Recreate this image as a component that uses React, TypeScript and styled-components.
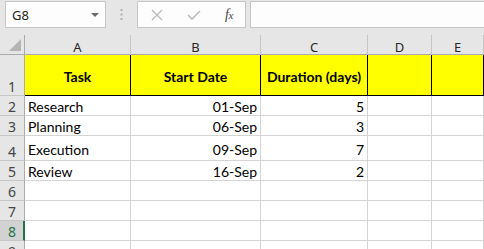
import React from "react";
import styled, { createGlobalStyle } from "styled-components";

const Global = createGlobalStyle`
  html, body { margin: 0; padding: 0; background: #ffffff; }
  * { box-sizing: border-box; }
`;

const Screen = styled.div`
  width: 484px;
  height: 249px;
  overflow: hidden;
  background: #ffffff;
  font-family: "Lato", "Liberation Sans", sans-serif;
`;

const FormulaBar = styled.div`
  display: flex;
  align-items: flex-start;
  height: 35px;
  padding-top: 1px;
  background: #e6e6e6;
`;

const NameBox = styled.div`
  margin-left: 5px;
  width: 101px;
  height: 27px;
  border: 1px solid #c6c6c6;
  background: #fdfdfd;
  display: flex;
  align-items: center;
  justify-content: space-between;
  padding: 0 6px 0 6px;
  font-family: "Noto Sans", sans-serif;
  font-size: 13px;
  color: #222;
`;

const Arrow = styled.span`
  width: 0;
  height: 0;
  border-left: 4px solid transparent;
  border-right: 4px solid transparent;
  border-top: 4px solid #6a6a6a;
  margin-top: 1px;
`;

const Grip = styled.div`
  width: 31px;
  height: 27px;
  display: flex;
  align-items: center;
  justify-content: center;
`;

const FxBox = styled.div`
  width: 109px;
  height: 27px;
  border: 1px solid #c6c6c6;
  background: #fdfdfd;
  display: flex;
  align-items: center;
  padding-left: 13px;
`;

const IconSlot = styled.span<{ $w: number }>`
  width: ${(p) => p.$w}px;
  display: flex;
  align-items: center;
`;

const Fx = styled.span`
  font-family: "Liberation Serif", serif;
  font-style: italic;
  font-size: 14px;
  color: #444;
  letter-spacing: -0.5px;
`;

const FxSub = styled.span`
  font-size: 11px;
`;

const FormulaInput = styled.div`
  flex: 1;
  height: 27px;
  margin-left: 4px;
  border: 1px solid #c6c6c6;
  border-right: none;
  background: #fdfdfd;
`;

const Sheet = styled.div`
  display: grid;
  grid-template-columns: 25px 106px 130px 107px 64px 1fr;
  grid-template-rows: 20px 41px 20px 20px 25px 20px 20px 20px 20px 20px;
`;

const Corner = styled.div`
  background: #e6e6e6;
  border-right: 1px solid #ababab;
  border-bottom: 1px solid #ababab;
  position: relative;
`;

const Triangle = styled.span`
  position: absolute;
  right: 3px;
  bottom: 3px;
  width: 0;
  height: 0;
  border-left: 12px solid transparent;
  border-bottom: 12px solid #b4b4b4;
`;

const ColHead = styled.div`
  background: #e6e6e6;
  border-right: 1px solid #c6c6c6;
  border-bottom: 1px solid #ababab;
  display: flex;
  align-items: center;
  justify-content: center;
  font-family: "Noto Sans", sans-serif;
  font-size: 13px;
  color: #262626;
  padding-top: 4px;
`;

const RowHead = styled.div<{ $sel?: boolean }>`
  background: ${(p) => (p.$sel ? "#d2d2d2" : "#e6e6e6")};
  border-right: ${(p) => (p.$sel ? "2px solid #217346" : "1px solid #ababab")};
  border-bottom: 1px solid #c6c6c6;
  display: flex;
  align-items: flex-end;
  justify-content: center;
  font-family: "Noto Sans", sans-serif;
  font-size: 14px;
  line-height: 16px;
  color: ${(p) => (p.$sel ? "#217346" : "#444")};
  padding-left: ${(p) => (p.$sel ? "1px" : "0")};
`;

const HeaderCell = styled.div`
  background: #ffff00;
  border-right: 1px solid #000;
  border-bottom: 1px solid #000;
  display: flex;
  align-items: center;
  justify-content: center;
  font-weight: 700;
  font-size: 14px;
  color: #000;
  padding-top: 3px;
`;

const Cell = styled.div<{ $align?: "left" | "right"; $lift?: number }>`
  border-right: 1px solid #d4d4d4;
  border-bottom: 1px solid #d4d4d4;
  display: flex;
  align-items: flex-end;
  justify-content: ${(p) => (p.$align === "right" ? "flex-end" : "flex-start")};
  padding: 0 3px ${(p) => p.$lift ?? 0}px 3px;
  font-size: 14px;
  line-height: 16px;
  color: #000;
  white-space: nowrap;
  overflow: hidden;
`;

const rows = [
  ["Research", "01-Sep", "5"],
  ["Planning", "06-Sep", "3"],
  ["Execution", "09-Sep", "7"],
  ["Review", "16-Sep", "2"],
];

export default function App() {
  return (
    <Screen>
      <Global />
      <FormulaBar>
        <NameBox>
          <span>G8</span>
          <Arrow />
        </NameBox>
        <Grip>
          <svg width="3" height="11" viewBox="0 0 3 11">
            <rect x="0.5" y="0" width="2" height="2" fill="#b0b0b0" />
            <rect x="0.5" y="4.5" width="2" height="2" fill="#b0b0b0" />
            <rect x="0.5" y="9" width="2" height="2" fill="#b0b0b0" />
          </svg>
        </Grip>
        <FxBox>
          <IconSlot $w={36}>
            <svg width="12" height="12" viewBox="0 0 12 12">
              <path d="M1 1 L11 11 M11 1 L1 11" stroke="#bcbcbc" strokeWidth="1.4" />
            </svg>
          </IconSlot>
          <IconSlot $w={38}>
            <svg width="14" height="12" viewBox="0 0 14 12">
              <path d="M1 6 L5 10 L13 2" stroke="#bcbcbc" strokeWidth="1.6" fill="none" />
            </svg>
          </IconSlot>
          <Fx>
            f<FxSub>x</FxSub>
          </Fx>
        </FxBox>
        <FormulaInput />
      </FormulaBar>
      <Sheet>
        <Corner>
          <Triangle />
        </Corner>
        {["A", "B", "C", "D", "E"].map((c) => (
          <ColHead key={c}>{c}</ColHead>
        ))}
        <RowHead>1</RowHead>
        <HeaderCell>Task</HeaderCell>
        <HeaderCell>Start Date</HeaderCell>
        <HeaderCell>Duration (days)</HeaderCell>
        <HeaderCell />
        <HeaderCell />
        {rows.map((r, i) => {
          const lift = i === 2 ? 2 : 0;
          return (
            <React.Fragment key={i}>
              <RowHead>{i + 2}</RowHead>
              <Cell $lift={lift}>{r[0]}</Cell>
              <Cell $align="right" $lift={lift}>{r[1]}</Cell>
              <Cell $align="right" $lift={lift}>{r[2]}</Cell>
              <Cell />
              <Cell />
            </React.Fragment>
          );
        })}
        {[6, 7, 8, 9].map((n) => (
          <React.Fragment key={n}>
            <RowHead $sel={n === 8}>{n}</RowHead>
            <Cell />
            <Cell />
            <Cell />
            <Cell />
            <Cell />
          </React.Fragment>
        ))}
      </Sheet>
    </Screen>
  );
}
